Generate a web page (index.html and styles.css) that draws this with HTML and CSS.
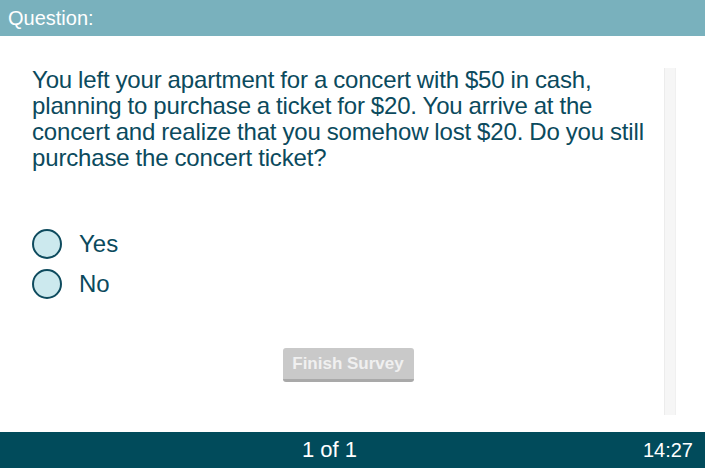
FILE: index.html
```html
<!DOCTYPE html>
<html>
<head>
<meta charset="utf-8">
<link rel="stylesheet" href="styles.css">
</head>
<body>
<div class="page">
  <header class="top">Question:</header>
  <main class="body">
    <div class="content">
      <p class="question">You left your apartment for a concert with $50 in cash, planning to purchase a ticket for $20. You arrive at the concert and realize that you somehow lost $20. Do you still purchase the concert ticket?</p>
      <div class="options">
        <label class="option"><span class="radio"></span><span>Yes</span></label>
        <label class="option"><span class="radio"></span><span>No</span></label>
      </div>
      <div class="actions"><button class="finish">Finish Survey</button></div>
    </div>
    <div class="rail"></div>
  </main>
  <footer class="bottom">
    <span class="count">1 of 1</span>
    <span class="timer">14:27</span>
  </footer>
</div>
</body>
</html>
```
FILE: styles.css
```css
html, body { margin: 0; padding: 0; }
body { font-family: "Liberation Sans", Arial, Helvetica, sans-serif; background: #fff; }
.page { width: 705px; height: 468px; display: flex; flex-direction: column; }
.top { height: 36px; background: #79b1bd; color: #fff; font-size: 20px; line-height: 36px; padding-left: 8px; box-sizing: border-box; }
.body { flex: 1; display: flex; padding: 0 29px 17px 32px; box-sizing: border-box; }
.content { flex: 1; min-width: 0; display: flex; flex-direction: column; padding-top: 31px; }
.question { margin: 0; font-size: 24px; line-height: 26px; color: #0b4a5d; width: 625px; letter-spacing: -0.15px; word-spacing: -0.5px; }
.options { margin-top: 58px; display: flex; flex-direction: column; gap: 10px; }
.option { display: flex; align-items: center; gap: 17px; font-size: 24px; color: #0b4a5d; height: 30px; }
.radio { width: 26px; height: 26px; border: 2px solid #0e4b5e; border-radius: 50%; background: #cce9ee; }
.actions { margin-top: 49px; display: flex; justify-content: center; }
.finish { width: 131px; height: 34px; background: #c9c9c9; border: none; border-radius: 3px; border-bottom: 3px solid #a9a9a9; color: #f0f0f0; font-family: inherit; font-weight: bold; font-size: 17px; margin-left: 0; padding: 0; }
.rail { width: 10px; background: #f6f6f6; border-left: 1px solid #ececec; border-right: 1px solid #f0f0f0; margin-top: 32px; }
.bottom { height: 36px; background: #014b5b; color: #fff; display: flex; align-items: center; }
.count { flex: 1; text-align: center; font-size: 22px; margin-left: 16px; }
.timer { font-size: 20px; padding-right: 12px; }
```
